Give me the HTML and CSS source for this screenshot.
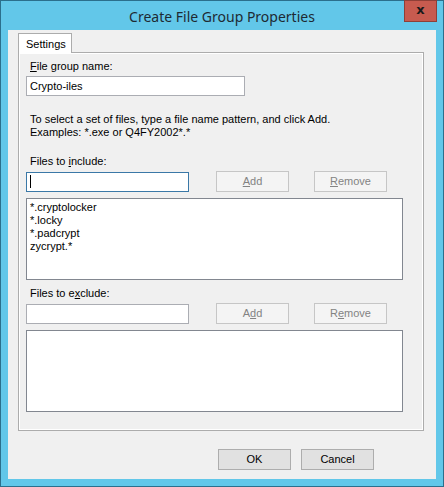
FILE: index.html
```html
<!DOCTYPE html>
<html lang="en">
<head>
    <meta charset="UTF-8">
    <meta name="viewport" content="width=device-width, initial-scale=1.0">
    <title>Create File Group Properties</title>
    <link rel="stylesheet" href="styles.css">
</head>
<body>
    <div class="window">
        <div class="titlebar">
            <span class="title">Create File Group Properties</span>
            <div class="close">x</div>
        </div>
        <div class="client">
            <div class="tabs">
                <div class="tab">Settings</div>
            </div>
            <div class="panel">
                <div class="label first"><u>F</u>ile group name:</div>
                <div class="textbox wide">Crypto-iles</div>

                <div class="hint">To select a set of files, type a file name pattern, and click Add.<br>Examples: *.exe or Q4FY2002*.*</div>

                <div class="label">Files to <u>i</u>nclude:</div>
                <div class="row">
                    <div class="textbox short focused"><span class="caret"></span></div>
                    <div class="button disabled add"><u>A</u>dd</div>
                    <div class="button disabled"><u>R</u>emove</div>
                </div>
                <div class="listbox">
                    <div>*.cryptolocker</div>
                    <div>*.locky</div>
                    <div>*.padcrypt</div>
                    <div>zycrypt.*</div>
                </div>

                <div class="label">Files to e<u>x</u>clude:</div>
                <div class="row">
                    <div class="textbox short"></div>
                    <div class="button disabled add">A<u>d</u>d</div>
                    <div class="button disabled">R<u>e</u>move</div>
                </div>
                <div class="listbox"></div>
            </div>
            <div class="footer">
                <div class="button">OK</div>
                <div class="button">Cancel</div>
            </div>
        </div>
    </div>
</body>
</html>
```

FILE: styles.css
```css
body {
    margin: 0;
    font-family: "Liberation Sans", Arial, sans-serif;
    font-size: 11px;
    color: #000;
}

.window {
    width: 444px;
    height: 487px;
    box-sizing: border-box;
    background-color: #62c7e9;
    border: 1px solid #2b6f8c;
    padding: 0 7px 7px 7px;
    display: flex;
    flex-direction: column;
}

.titlebar {
    position: relative;
    height: 29px;
    display: flex;
    align-items: center;
    justify-content: center;
}

.title {
    font-family: "Noto Sans", sans-serif;
    font-size: 14px;
    color: #1e2a33;
    margin-top: 2px;
}

.close {
    position: absolute;
    top: -1px;
    right: -1px;
    width: 31px;
    height: 20px;
    background-color: #c75b4f;
    border: 1px solid #8f3f37;
    color: #1a1a1a;
    font-family: "DejaVu Sans", sans-serif;
    font-weight: bold;
    font-size: 13px;
    line-height: 17px;
    text-align: center;
}

.client {
    flex: 1;
    background-color: #f0f0f0;
    padding: 3px 0 0 10px;
}

.tabs {
    display: flex;
    height: 20px;
    margin-bottom: -1px;
    position: relative;
}

.tab {
    width: 54px;
    height: 20px;
    box-sizing: border-box;
    background-color: #fff;
    border: 1px solid #acacac;
    border-bottom: none;
    padding: 4px 0 0 7px;
    line-height: 13px;
}

.panel {
    width: 406px;
    height: 379px;
    box-sizing: border-box;
    border: 1px solid #acacac;
    box-shadow: inset 0 0 0 1px #fff;
    padding: 0 7px;
}

.label {
    line-height: 13px;
    margin-top: 7px;
    padding-left: 4px;
}

.label.first {
    margin-top: 7px;
}

.hint {
    line-height: 13px;
    margin-top: 17px;
    margin-bottom: 16px;
    padding-left: 4px;
}

.textbox {
    height: 20px;
    box-sizing: border-box;
    background-color: #fff;
    border: 1px solid #abadb3;
    padding: 2px 3px;
    line-height: 14px;
}

.textbox.wide {
    width: 219px;
    margin-top: 3px;
}

.textbox.short {
    width: 163px;
    margin-top: 1px;
}

.textbox.focused {
    border-color: #3a78a7;
}

.caret {
    display: inline-block;
    width: 1px;
    height: 13px;
    background-color: #000;
    vertical-align: top;
}

.row {
    display: flex;
    align-items: flex-start;
    margin-top: 3px;
}

.button {
    width: 73px;
    height: 21px;
    box-sizing: border-box;
    background-color: #e1e1e1;
    border: 1px solid #adadad;
    text-align: center;
    line-height: 19px;
}

.button.disabled {
    background-color: #f4f4f4;
    border-color: #c6c6c6;
    color: #838383;
}

.button.add {
    margin-left: 27px;
    margin-right: 25px;
}

.listbox {
    width: 377px;
    height: 82px;
    box-sizing: border-box;
    background-color: #fff;
    border: 1px solid #828790;
    margin-top: 6px;
    padding: 2px 3px;
    line-height: 13px;
}

.footer {
    display: flex;
    gap: 10px;
    margin: 18px 0 0 200px;
}
```
